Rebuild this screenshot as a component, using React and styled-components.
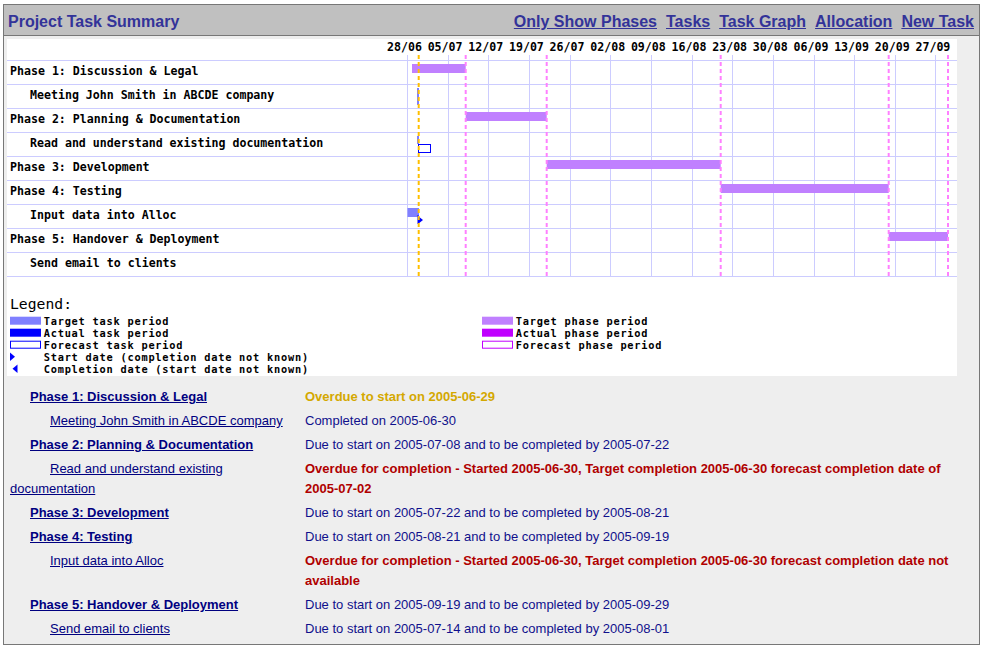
import styled, { createGlobalStyle } from "styled-components";

const GlobalStyle = createGlobalStyle`
  html, body {
    margin: 0;
    padding: 0;
    background: #ffffff;
  }
  body {
    font-family: "Liberation Sans", Arial, sans-serif;
  }
`;

const Page = styled.div`
  margin: 4px 6px 0 3px;
  width: 977px;
  box-sizing: border-box;
  border: 1px solid #777777;
  background: #eeeeee;
`;

const Header = styled.div`
  height: 31px;
  box-sizing: border-box;
  padding: 7px 5px 0 4px;
  background: #c0c0c0;
  border-bottom: 1px solid #777777;
  display: flex;
  justify-content: space-between;
  align-items: flex-start;
`;

const Title = styled.h1`
  margin: 0;
  font: bold 16px/20px "Liberation Sans", Arial, sans-serif;
  color: #333399;
`;

const Nav = styled.nav`
  display: flex;
  gap: 9px;
`;

const NavLink = styled.a`
  font: bold 16px/20px "Liberation Sans", Arial, sans-serif;
  color: #333399;
  text-decoration: underline;
  cursor: pointer;
`;

const Body = styled.div`
  padding: 3px;
`;

const ChartBox = styled.div`
  width: 950px;
  height: 337px;
  background: #ffffff;

  > svg {
    display: block;
  }
`;

const ChartText = styled.text`
  font-family: "DejaVu Sans Mono", "Liberation Mono", monospace;
  font-size: 11.6px;
  font-weight: bold;
  fill: #000000;
`;

const LegendTitle = styled.text`
  font-family: "DejaVu Sans Mono", "Liberation Mono", monospace;
  font-size: 14px;
  font-weight: normal;
  fill: #000000;
`;

const LegendText = styled.text`
  font-family: "DejaVu Sans Mono", "Liberation Mono", monospace;
  font-size: 10.3px;
  letter-spacing: 0.78px;
  font-weight: bold;
  fill: #000000;
`;

const TaskTable = styled.table`
  margin-top: 9px;
  width: 100%;
  border-collapse: collapse;
  table-layout: fixed;
`;

const NameCell = styled.td`
  width: 289px;
  padding: 2px 3px;
  vertical-align: top;
  font-size: 13px;
  line-height: 20px;
  text-indent: ${(p) => (p.$task ? "40px" : "20px")};
`;

const StatusCell = styled.td`
  padding: 2px 3px;
  vertical-align: top;
  font-size: 13px;
  line-height: 20px;
  font-weight: ${(p) => (p.$tone ? "bold" : "normal")};
  color: ${(p) =>
    p.$tone === "warn" ? "#d4a800" : p.$tone === "late" ? "#b00000" : "#10108c"};
`;

const ItemLink = styled.a`
  color: #000080;
  font-weight: ${(p) => (p.$task ? "normal" : "bold")};
  text-decoration: underline;
  cursor: pointer;
`;

const dates = [
  "28/06", "05/07", "12/07", "19/07", "26/07", "02/08", "09/08",
  "16/08", "23/08", "30/08", "06/09", "13/09", "20/09", "27/09",
];

const rows = [
  {
    task: false,
    name: "Phase 1: Discussion & Legal",
    status: "Overdue to start on 2005-06-29",
    tone: "warn",
  },
  {
    task: true,
    name: "Meeting John Smith in ABCDE company",
    status: "Completed on 2005-06-30",
  },
  {
    task: false,
    name: "Phase 2: Planning & Documentation",
    status: "Due to start on 2005-07-08 and to be completed by 2005-07-22",
  },
  {
    task: true,
    name: "Read and understand existing documentation",
    status:
      "Overdue for completion - Started 2005-06-30, Target completion 2005-06-30 forecast completion date of 2005-07-02",
    tone: "late",
  },
  {
    task: false,
    name: "Phase 3: Development",
    status: "Due to start on 2005-07-22 and to be completed by 2005-08-21",
  },
  {
    task: false,
    name: "Phase 4: Testing",
    status: "Due to start on 2005-08-21 and to be completed by 2005-09-19",
  },
  {
    task: true,
    name: "Input data into Alloc",
    status:
      "Overdue for completion - Started 2005-06-30, Target completion 2005-06-30 forecast completion date not available",
    tone: "late",
  },
  {
    task: false,
    name: "Phase 5: Handover & Deployment",
    status: "Due to start on 2005-09-19 and to be completed by 2005-09-29",
  },
  {
    task: true,
    name: "Send email to clients",
    status: "Due to start on 2005-07-14 and to be completed by 2005-08-01",
  },
];

// phase bars: [x1, x2, row]
const phaseBars = [
  [405, 458.7, 0],
  [458.7, 539.7, 2],
  [539.7, 713.7, 4],
  [713.7, 881.7, 5],
  [881.7, 941, 7],
];

const phaseMarks = [458.7, 539.7, 713.7, 881.7, 941];

const taskLegend = [
  "Target task period",
  "Actual task period",
  "Forecast task period",
  "Start date (completion date not known)",
  "Completion date (start date not known)",
];

const phaseLegend = [
  "Target phase period",
  "Actual phase period",
  "Forecast phase period",
];

const GanttChart = () => {
  const gridTop = 16;
  const gridBottom = 237.5;
  return (
    <svg width="950" height="337" viewBox="0 0 950 337">
      {dates.map((d, i) => (
        <ChartText key={d} x={380 + 40.65 * i} y="12">
          {d}
        </ChartText>
      ))}

      {Array.from({ length: 10 }).map((_, k) => (
        <line
          key={"h" + k}
          x1="0"
          x2="950"
          y1={21.5 + 24 * k}
          y2={21.5 + 24 * k}
          stroke="#ccccff"
          strokeWidth="1"
        />
      ))}
      {dates.map((d, i) => {
        const x = Math.round(400 + 40.65 * i) + 0.5;
        return (
          <line
            key={"v" + d}
            x1={x}
            x2={x}
            y1={gridTop}
            y2={gridBottom}
            stroke="#ccccff"
            strokeWidth="1"
          />
        );
      })}

      {rows.map((r, k) => (
        <ChartText key={r.name} x={r.task ? 23 : 3} y={36 + 24 * k}>
          {r.name}
        </ChartText>
      ))}

      {phaseBars.map(([x1, x2, row]) => (
        <rect
          key={"p" + row}
          x={x1}
          y={25 + 24 * row}
          width={x2 - x1}
          height="9"
          fill="#c080ff"
        />
      ))}

      {/* tasks */}
      <rect x="410.5" y="49" width="1" height="17" fill="#0000ff" />
      <rect x="410.5" y="97" width="1" height="8" fill="#0000ff" />
      <rect
        x="411.5"
        y="105.5"
        width="12"
        height="8"
        fill="#ffffff"
        stroke="#0000ff"
        strokeWidth="1"
      />
      <rect x="400.5" y="169" width="11.5" height="9" fill="#8080ff" />
      <rect x="410.5" y="176" width="1" height="9" fill="#0000ff" />
      <polygon points="411,177 416,181 411,185" fill="#0000ff" />

      {phaseMarks.map((x) => (
        <line
          key={"m" + x}
          x1={x}
          x2={x}
          y1={gridTop}
          y2={gridBottom}
          stroke="#ff80ff"
          strokeWidth="2"
          strokeDasharray="4 3"
        />
      ))}
      <line
        x1="411.7"
        x2="411.7"
        y1={gridTop}
        y2={gridBottom}
        stroke="#ffbf00"
        strokeWidth="2"
        strokeDasharray="4 3"
      />

      {/* legend */}
      <LegendTitle x="3" y="270.3" textLength="62" lengthAdjust="spacingAndGlyphs">
        Legend:
      </LegendTitle>

      <rect x="3" y="277.7" width="31" height="8" fill="#8080ff" />
      <rect x="3" y="289.7" width="31" height="8" fill="#0000ff" />
      <rect x="3.5" y="302.2" width="30" height="7" fill="#ffffff" stroke="#0000ff" />
      <polygon points="3,313.5 8,317.7 3,322" fill="#0000ff" />
      <polygon points="10.5,325.5 5.5,329.7 10.5,334" fill="#0000ff" />
      {taskLegend.map((t, i) => (
        <LegendText key={t} x="36.7" y={285.5 + 12 * i}>
          {t}
        </LegendText>
      ))}

      <rect x="475" y="277.7" width="31" height="8" fill="#c080ff" />
      <rect x="475" y="289.7" width="31" height="8" fill="#c000ff" />
      <rect x="475.5" y="302.2" width="30" height="7" fill="#ffffff" stroke="#c000ff" />
      {phaseLegend.map((t, i) => (
        <LegendText key={t} x="508.7" y={285.5 + 12 * i}>
          {t}
        </LegendText>
      ))}
    </svg>
  );
};

const App = () => {
  return (
    <>
      <GlobalStyle />
      <Page>
        <Header>
          <Title>Project Task Summary</Title>
          <Nav>
            <NavLink>Only Show Phases</NavLink>
            <NavLink>Tasks</NavLink>
            <NavLink>Task Graph</NavLink>
            <NavLink>Allocation</NavLink>
            <NavLink>New Task</NavLink>
          </Nav>
        </Header>
        <Body>
          <ChartBox>
            <GanttChart />
          </ChartBox>
          <TaskTable>
            <tbody>
              {rows.map((r) => (
                <tr key={r.name}>
                  <NameCell $task={r.task}>
                    <ItemLink $task={r.task}>{r.name}</ItemLink>
                  </NameCell>
                  <StatusCell $tone={r.tone}>{r.status}</StatusCell>
                </tr>
              ))}
            </tbody>
          </TaskTable>
        </Body>
      </Page>
    </>
  );
};

export default App;
